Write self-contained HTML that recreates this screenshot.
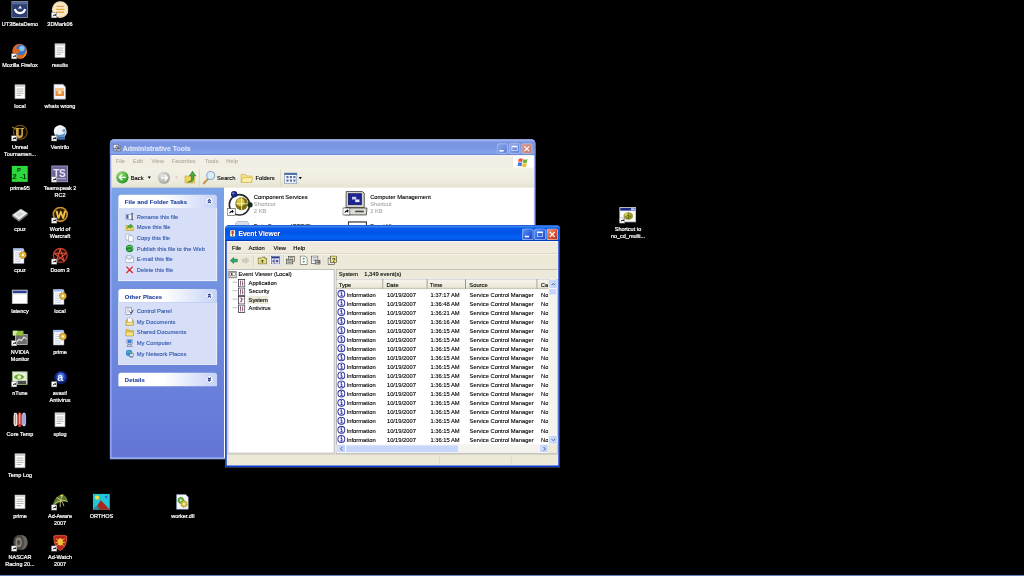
<!DOCTYPE html>
<html><head><meta charset="utf-8"><title>Desktop</title>
<style>
html,body{margin:0;padding:0;background:#000;overflow:hidden;width:1024px;height:576px}
#root{position:absolute;left:0;top:0;width:1920px;height:1080px;background:#000;transform:scale(0.533333);transform-origin:0 0;filter:blur(0.8px);font-family:"Liberation Sans",sans-serif;font-size:10.85px;color:#000;overflow:hidden;-webkit-text-stroke-width:0.22px}
#root *{box-sizing:border-box}
.di{position:absolute;width:75px;height:77px;text-align:center}
.di .ic{position:absolute;left:21px;top:0;width:32px;height:32px}
.di .ic>svg{position:absolute;left:0;top:0;width:32px;height:32px}
.di .ic>svg.sc{left:0;top:21px;width:11px;height:11px}
.di .lb{position:absolute;left:-10px;width:95px;top:36.800px;color:#fff;line-height:13px;font-size:10.3px;-webkit-text-stroke-width:0.4px}
#taskbar{position:absolute;left:0;top:1077.800px;width:1920px;height:2.200px;background:#647cbc}
.win{position:absolute;overflow:hidden}
.abs{position:absolute}
.tb-title{position:absolute;left:0;top:0;right:0;height:30px}
.tb-title .cap{position:absolute;left:25px;top:9.5px;font-weight:bold;font-size:13px;color:#fff;white-space:nowrap}
.tb-title .cap.act{text-shadow:1px 1px 0 #0a1883}
.cbtn{position:absolute;top:6.5px;width:21px;height:21px;border-radius:3px;border:1px solid rgba(255,255,255,.75)}
.menu span{position:absolute;top:4.500px;white-space:nowrap}
.sph{background:linear-gradient(90deg,#fff,#fff 45%,#c6d3f7);border-radius:5px 5px 0 0;color:#1f3f9c;font-weight:bold;font-size:11px;letter-spacing:.25px;padding:8px 0 0 12px;white-space:nowrap}
.sph i{position:absolute;right:7px;top:5px;width:15px;height:15px;border-radius:50%;background:#fff;border:1px solid #a8b8ea}
.spb{background:#d6dff7;border:1px solid #fff;border-top:0}
.spb a{position:absolute;left:33.500px;color:#3257ac;white-space:nowrap}
.tl{margin-top:-3px;position:absolute;left:8px;width:9px;height:1.500px;background:#c4c4c4}
.lg{left:18px;width:14px;height:16px}
.hdr{top:0;height:18px;background:linear-gradient(#f6f5ef,#ece9d8 80%,#d8d4c0);border-right:2px solid #8e8c7c;border-bottom:1.500px solid #a8a594;padding:4px 0 0 4px;white-space:nowrap;overflow:hidden}
.row{position:absolute;left:0;width:396px;height:17px;white-space:nowrap}
.row span{position:absolute;top:3px}
.row svg{position:absolute;left:1px;top:0;width:16px;height:16px}
.sbb{width:17px;height:17px;background:linear-gradient(90deg,#d4e0fd,#bccefa);border:1px solid #fff;border-radius:3px;box-shadow:0 0 0 1px #b4c8f6 inset}
.sbb svg{position:absolute;left:4px;top:5px;width:9px;height:6px}
.spb a i{position:absolute;left:-21.500px;top:-2px;width:16px;height:16px}
.spb a i svg{width:16px;height:16px;display:block}
.sph i svg{position:absolute;left:2px;top:2px;width:9px;height:9px}
.menu.m2 span{top:3px}
.cbtn.ina{top:7.500px;width:19.500px;height:19.500px}
.cbtn.ina>*{transform:translate(-0.700px,-0.700px)}

</style></head>
<body>
<div id="root">
<div class="di" style="left:0.0px;top:2.0px"><div class="ic"><svg viewBox="0 0 32 32"><rect x="1" y="1" width="30" height="30" fill="#2c3f72" stroke="#8e9cc0" stroke-width="1.5"/><rect x="2" y="2" width="28" height="4" fill="#5a6e9e"/><path d="M7 15c2 10 17 10 19 0" fill="none" stroke="#fff" stroke-width="4"/><path d="M13 14l4-5 3 5z" fill="#fff"/></svg></div><div class="lb">UT3BetaDemo</div></div>
<div class="di" style="left:75.0px;top:2.0px"><div class="ic"><svg viewBox="0 0 32 32"><circle cx="17" cy="16" r="14.500" fill="#f8e8c8" stroke="#f2d8ae" stroke-width="2.500"/><g stroke="#eca444" stroke-width="2.600"><path d="M10 10h14M9 15.500h16M10 21h14"/></g></svg><svg class="sc" viewBox="0 0 11 11"><rect width="11" height="11" fill="#fff"/><rect x=".5" y=".5" width="10" height="10" fill="none" stroke="#555"/><path d="M3 8.5c0-3 1.5-4.5 4-4.5V2.5L9.5 5 7 7.5V6C5 6 4 7 3 8.5z" fill="#000"/></svg></div><div class="lb">3DMark06</div></div>
<div class="di" style="left:0.0px;top:78.9px"><div class="ic"><svg viewBox="0 0 32 32"><circle cx="16" cy="17" r="14" fill="#d8601c"/><circle cx="18" cy="15" r="10.500" fill="#3a74c4"/><circle cx="20" cy="12" r="5" fill="#8cc0ee"/><path d="M3 13c2-6 7-9 13-9-5 2-7 5-6 9 3-1 6 1 6 4s-3 5-7 3c2 4 8 6 14 3 3-2 5-5 5-9 2 8-2 15-9 17S2 22 3 13z" fill="#e0681c"/><path d="M28 14c2 8-2 15-9 17 6-4 8-10 9-17z" fill="#f4b42c"/></svg><svg class="sc" viewBox="0 0 11 11"><rect width="11" height="11" fill="#fff"/><rect x=".5" y=".5" width="10" height="10" fill="none" stroke="#555"/><path d="M3 8.5c0-3 1.5-4.5 4-4.5V2.5L9.5 5 7 7.5V6C5 6 4 7 3 8.5z" fill="#000"/></svg></div><div class="lb">Mozilla Firefox</div></div>
<div class="di" style="left:75.0px;top:78.9px"><div class="ic"><svg viewBox="0 0 32 32"><path d="M7 3h19v26H7z" fill="#fdfdfa" stroke="#9a9a9a"/><path d="M7 3h19v4H7z" fill="#d4d4d4"/><g stroke="#a8a8a8" stroke-width="1.6"><path d="M10 11h13M10 15h13M10 19h13M10 23h9"/></g></svg></div><div class="lb">results</div></div>
<div class="di" style="left:0.0px;top:155.9px"><div class="ic"><svg viewBox="0 0 32 32"><path d="M7 3h19v26H7z" fill="#fdfdfa" stroke="#9a9a9a"/><path d="M7 3h19v4H7z" fill="#d4d4d4"/><g stroke="#a8a8a8" stroke-width="1.6"><path d="M10 11h13M10 15h13M10 19h13M10 23h9"/></g></svg></div><div class="lb">local</div></div>
<div class="di" style="left:75.0px;top:155.9px"><div class="ic"><svg viewBox="0 0 32 32"><path d="M5 2h17l5 5v23H5z" fill="#f6f8ff" stroke="#8a96b8"/><rect x="8" y="9" width="16" height="15" fill="#e98b3a"/><rect x="8" y="9" width="16" height="6" fill="#f6c58c"/><circle cx="16" cy="17" r="3.5" fill="#fbe3b0"/></svg></div><div class="lb">whats wrong</div></div>
<div class="di" style="left:0.0px;top:232.8px"><div class="ic"><svg viewBox="0 0 32 32"><circle cx="17" cy="15" r="13" fill="#120c02" stroke="#7a5a18" stroke-width="2"/><path d="M9 7h7v2h-2v10c0 3 5 3 5 0V9h-2V7h7v2h-2v11c0 8-13 8-13 0V9H9z" fill="#cfa444"/><path d="M2 5l8 5" stroke="#a88430" stroke-width="2"/></svg><svg class="sc" viewBox="0 0 11 11"><rect width="11" height="11" fill="#fff"/><rect x=".5" y=".5" width="10" height="10" fill="none" stroke="#555"/><path d="M3 8.5c0-3 1.5-4.5 4-4.5V2.5L9.5 5 7 7.5V6C5 6 4 7 3 8.5z" fill="#000"/></svg></div><div class="lb">Unreal<br>Tournamen...</div></div>
<div class="di" style="left:75.0px;top:232.8px"><div class="ic"><svg viewBox="0 0 32 32"><ellipse cx="17" cy="14" rx="12" ry="12" fill="#e9f0f8"/><path d="M5 14c0-9 8-13 15-11-6 1-9 5-9 10z" fill="#fff"/><path d="M8 18c4 3 13 3 19-3-1 9-8 14-15 12z" fill="#5a8fc8"/><path d="M12 24h14v5H12z" fill="#3a6aa8"/><circle cx="24" cy="12" r="3" fill="#7e9cc0"/></svg><svg class="sc" viewBox="0 0 11 11"><rect width="11" height="11" fill="#fff"/><rect x=".5" y=".5" width="10" height="10" fill="none" stroke="#555"/><path d="M3 8.5c0-3 1.5-4.5 4-4.5V2.5L9.5 5 7 7.5V6C5 6 4 7 3 8.5z" fill="#000"/></svg></div><div class="lb">Ventrilo</div></div>
<div class="di" style="left:0.0px;top:309.7px"><div class="ic"><svg viewBox="0 0 32 32"><rect x="1" y="1" width="30" height="30" fill="#2cd83c"/><text x="2" y="26" font-family="Liberation Sans, sans-serif" font-size="15" font-weight="bold" fill="#0a2a0a">2</text><text x="11" y="13" font-family="Liberation Sans, sans-serif" font-size="11" font-weight="bold" fill="#0a2a0a">P</text><text x="17" y="25" font-family="Liberation Sans, sans-serif" font-size="13" font-weight="bold" fill="#0a2a0a">-1</text></svg></div><div class="lb">prime95</div></div>
<div class="di" style="left:75.0px;top:309.7px"><div class="ic"><svg viewBox="0 0 32 32"><rect x="1" y="1" width="30" height="30" fill="#6a6596" stroke="#b9b6d6" stroke-width="1.5"/><text x="4" y="21" font-family="Liberation Sans, sans-serif" font-size="19" font-weight="bold" fill="#e8e6f6" letter-spacing="-1">TS</text><path d="M4 25h24" stroke="#bdb9dd" stroke-width="2"/></svg><svg class="sc" viewBox="0 0 11 11"><rect width="11" height="11" fill="#fff"/><rect x=".5" y=".5" width="10" height="10" fill="none" stroke="#555"/><path d="M3 8.5c0-3 1.5-4.5 4-4.5V2.5L9.5 5 7 7.5V6C5 6 4 7 3 8.5z" fill="#000"/></svg></div><div class="lb">Teamspeak 2<br>RC2</div></div>
<div class="di" style="left:0.0px;top:386.7px"><div class="ic"><svg viewBox="0 0 32 32"><path d="M2 16L18 5l13 8-16 13z" fill="#e9ece9" stroke="#9aa09a"/><path d="M2 16l13 10v3L2 19z" fill="#8f968f"/><path d="M15 26l16-13v3L15 29z" fill="#6f766f"/><path d="M9 15l8-5 6 4-8 6z" fill="#cfd4cf"/></svg></div><div class="lb">cpuz</div></div>
<div class="di" style="left:75.0px;top:386.7px"><div class="ic"><svg viewBox="0 0 32 32"><circle cx="17" cy="15" r="13" fill="#2a1a06" stroke="#c9952a" stroke-width="3"/><path d="M8 8h4l2 9 3-9h2l3 9 2-9h4l-4 15h-3l-3-8-3 8h-3z" fill="#f0c24c"/></svg><svg class="sc" viewBox="0 0 11 11"><rect width="11" height="11" fill="#fff"/><rect x=".5" y=".5" width="10" height="10" fill="none" stroke="#555"/><path d="M3 8.5c0-3 1.5-4.5 4-4.5V2.5L9.5 5 7 7.5V6C5 6 4 7 3 8.5z" fill="#000"/></svg></div><div class="lb">World of<br>Warcraft</div></div>
<div class="di" style="left:0.0px;top:463.6px"><div class="ic"><svg viewBox="0 0 32 32"><path d="M4 2h17l3 3v25H4z" fill="#fdfdff" stroke="#8a96b8"/><path d="M4 2h20v4H4z" fill="#a9c0ee"/><g stroke="#b9c4dc" stroke-width="1.5"><path d="M7 10h12M7 14h10M7 18h10M7 22h12M7 26h12"/></g><circle cx="22" cy="14" r="6.5" fill="#e2b13a" stroke="#8f6a14" stroke-width="1.5" stroke-dasharray="3 2"/><circle cx="22" cy="14" r="2.3" fill="#fff6cf"/></svg></div><div class="lb">cpuz</div></div>
<div class="di" style="left:75.0px;top:463.6px"><div class="ic"><svg viewBox="0 0 32 32"><circle cx="17" cy="15" r="13" fill="#2a0804" stroke="#c43a24" stroke-width="2.5"/><path d="M17 3l7 22L6 11h22L10 25z" fill="none" stroke="#e2553a" stroke-width="2"/></svg><svg class="sc" viewBox="0 0 11 11"><rect width="11" height="11" fill="#fff"/><rect x=".5" y=".5" width="10" height="10" fill="none" stroke="#555"/><path d="M3 8.5c0-3 1.5-4.5 4-4.5V2.5L9.5 5 7 7.5V6C5 6 4 7 3 8.5z" fill="#000"/></svg></div><div class="lb">Doom 3</div></div>
<div class="di" style="left:0.0px;top:540.5px"><div class="ic"><svg viewBox="0 0 32 32"><rect x="2" y="3" width="28" height="25" fill="#fff" stroke="#c9c9c9" stroke-width="1.5"/><rect x="3" y="4" width="26" height="5" fill="#2a3f9a"/><rect x="3" y="9" width="26" height="2" fill="#d8d4c8"/></svg></div><div class="lb">latency</div></div>
<div class="di" style="left:75.0px;top:540.5px"><div class="ic"><svg viewBox="0 0 32 32"><path d="M4 2h17l3 3v25H4z" fill="#fdfdff" stroke="#8a96b8"/><path d="M4 2h20v4H4z" fill="#a9c0ee"/><g stroke="#b9c4dc" stroke-width="1.5"><path d="M7 10h12M7 14h10M7 18h10M7 22h12M7 26h12"/></g><circle cx="22" cy="14" r="6.5" fill="#e2b13a" stroke="#8f6a14" stroke-width="1.5" stroke-dasharray="3 2"/><circle cx="22" cy="14" r="2.3" fill="#fff6cf"/></svg></div><div class="lb">local</div></div>
<div class="di" style="left:0.0px;top:617.4px"><div class="ic"><svg viewBox="0 0 32 32"><rect x="8" y="10" width="22" height="19" fill="#6d6d6d" stroke="#c9c9c9" stroke-width="1.5"/><path d="M10 25l5-6 4 3 5-7 5 4" fill="none" stroke="#e8e8e8" stroke-width="2"/><path d="M3 3h20v9H3z" fill="#8fbf3a"/><path d="M3 3h9l-4 9H3z" fill="#d6eaa8"/></svg><svg class="sc" viewBox="0 0 11 11"><rect width="11" height="11" fill="#fff"/><rect x=".5" y=".5" width="10" height="10" fill="none" stroke="#555"/><path d="M3 8.5c0-3 1.5-4.5 4-4.5V2.5L9.5 5 7 7.5V6C5 6 4 7 3 8.5z" fill="#000"/></svg></div><div class="lb">NVIDIA<br>Monitor</div></div>
<div class="di" style="left:75.0px;top:617.4px"><div class="ic"><svg viewBox="0 0 32 32"><path d="M4 2h17l3 3v25H4z" fill="#fdfdff" stroke="#8a96b8"/><path d="M4 2h20v4H4z" fill="#a9c0ee"/><g stroke="#b9c4dc" stroke-width="1.5"><path d="M7 10h12M7 14h10M7 18h10M7 22h12M7 26h12"/></g><circle cx="22" cy="14" r="6.5" fill="#e2b13a" stroke="#8f6a14" stroke-width="1.5" stroke-dasharray="3 2"/><circle cx="22" cy="14" r="2.3" fill="#fff6cf"/></svg></div><div class="lb">prime</div></div>
<div class="di" style="left:0.0px;top:694.4px"><div class="ic"><svg viewBox="0 0 32 32"><rect x="2" y="3" width="28" height="24" fill="#e7efe0" stroke="#8aa76a" stroke-width="1.5"/><path d="M5 13c4-7 14-7 20 0-6 7-16 7-20 0z" fill="#6fae2a"/><circle cx="15" cy="13" r="3.5" fill="#e9f4d8"/><rect x="12" y="20" width="16" height="6" fill="#4a4a4a"/></svg><svg class="sc" viewBox="0 0 11 11"><rect width="11" height="11" fill="#fff"/><rect x=".5" y=".5" width="10" height="10" fill="none" stroke="#555"/><path d="M3 8.5c0-3 1.5-4.5 4-4.5V2.5L9.5 5 7 7.5V6C5 6 4 7 3 8.5z" fill="#000"/></svg></div><div class="lb">nTune</div></div>
<div class="di" style="left:75.0px;top:694.4px"><div class="ic"><svg viewBox="0 0 32 32"><circle cx="18" cy="14" r="12.500" fill="#0e1e6a"/><circle cx="18" cy="13" r="9" fill="#2448b8"/><circle cx="18" cy="11" r="5.500" fill="#4a7ae0"/><text x="11.500" y="21" font-family="Liberation Sans, sans-serif" font-size="20" font-weight="bold" fill="#eef2ff">a</text></svg><svg class="sc" viewBox="0 0 11 11"><rect width="11" height="11" fill="#fff"/><rect x=".5" y=".5" width="10" height="10" fill="none" stroke="#555"/><path d="M3 8.5c0-3 1.5-4.5 4-4.5V2.5L9.5 5 7 7.5V6C5 6 4 7 3 8.5z" fill="#000"/></svg></div><div class="lb">avast!<br>Antivirus</div></div>
<div class="di" style="left:0.0px;top:771.3px"><div class="ic"><svg viewBox="0 0 32 32"><rect x="4" y="6" width="24" height="20" rx="4" fill="#7a6ea8"/><rect x="5" y="3" width="6" height="25" rx="2.500" fill="#f0e4dc"/><rect x="7" y="5" width="2" height="20" fill="#c88a7a"/><rect x="13" y="2" width="6" height="28" rx="3" fill="#c8382a"/><rect x="15" y="4" width="2" height="20" fill="#f8c8c0"/><rect x="21" y="3" width="6" height="25" rx="2.500" fill="#dcd8f0"/><rect x="23" y="5" width="2" height="20" fill="#6a7ad0"/></svg></div><div class="lb">Core Temp</div></div>
<div class="di" style="left:75.0px;top:771.3px"><div class="ic"><svg viewBox="0 0 32 32"><path d="M7 3h19v26H7z" fill="#fdfdfa" stroke="#9a9a9a"/><path d="M7 3h19v4H7z" fill="#d4d4d4"/><g stroke="#a8a8a8" stroke-width="1.6"><path d="M10 11h13M10 15h13M10 19h13M10 23h9"/></g></svg></div><div class="lb">splog</div></div>
<div class="di" style="left:0.0px;top:848.2px"><div class="ic"><svg viewBox="0 0 32 32"><path d="M7 3h19v26H7z" fill="#fdfdfa" stroke="#9a9a9a"/><path d="M7 3h19v4H7z" fill="#d4d4d4"/><g stroke="#a8a8a8" stroke-width="1.6"><path d="M10 11h13M10 15h13M10 19h13M10 23h9"/></g></svg></div><div class="lb">Temp Log</div></div>
<div class="di" style="left:0.0px;top:925.2px"><div class="ic"><svg viewBox="0 0 32 32"><path d="M7 3h19v26H7z" fill="#fdfdfa" stroke="#9a9a9a"/><path d="M7 3h19v4H7z" fill="#d4d4d4"/><g stroke="#a8a8a8" stroke-width="1.6"><path d="M10 11h13M10 15h13M10 19h13M10 23h9"/></g></svg></div><div class="lb">prime</div></div>
<div class="di" style="left:75.0px;top:925.2px"><div class="ic"><svg viewBox="0 0 32 32"><path d="M3 24C4 10 14 2 22 2c6 3 9 9 9 14-8-2-20 2-28 8z" fill="#5f7a2e"/><path d="M22 2c-4 6-6 16-5 24M3 24c8-10 18-14 28-8M10 8c6 2 12 8 14 16" fill="none" stroke="#d4d08a" stroke-width="1.6"/><path d="M16 3l6-1-2 5z" fill="#e8d44a"/></svg><svg class="sc" viewBox="0 0 11 11"><rect width="11" height="11" fill="#fff"/><rect x=".5" y=".5" width="10" height="10" fill="none" stroke="#555"/><path d="M3 8.5c0-3 1.5-4.5 4-4.5V2.5L9.5 5 7 7.5V6C5 6 4 7 3 8.5z" fill="#000"/></svg></div><div class="lb">Ad-Aware<br>2007</div></div>
<div class="di" style="left:152.6px;top:925.2px"><div class="ic"><svg viewBox="0 0 32 32"><rect x="0" y="1" width="32" height="30" fill="#22c6d6"/><circle cx="8" cy="8" r="4" fill="#f2e23a"/><path d="M22 6l6-2-2 6z" fill="#2a6ad6"/><path d="M0 31l9-9 6-9 6 6 11 12z" fill="#a8241c"/><path d="M0 31l9-9 3 9z" fill="#1c8fa8"/></svg></div><div class="lb">ORTHOS</div></div>
<div class="di" style="left:305.2px;top:925.2px"><div class="ic"><svg viewBox="0 0 32 32"><path d="M5 2h17l5 5v23H5z" fill="#f6f8ff" stroke="#8a96b8"/><circle cx="13" cy="13" r="5.5" fill="#5fb43a" stroke="#2f7a1c" stroke-width="1.5" stroke-dasharray="3 1.6"/><circle cx="19" cy="20" r="6" fill="#d6c43a" stroke="#8f7f14" stroke-width="1.5" stroke-dasharray="3 1.6"/><circle cx="13" cy="13" r="1.8" fill="#f6f8ff"/><circle cx="19" cy="20" r="2" fill="#f6f8ff"/></svg></div><div class="lb">worker.dll</div></div>
<div class="di" style="left:0.0px;top:1002.1px"><div class="ic"><svg viewBox="0 0 32 32"><ellipse cx="19" cy="15" rx="12" ry="14" fill="#6a6660"/><ellipse cx="14" cy="15" rx="10" ry="14" fill="#4a4640"/><ellipse cx="14" cy="15" rx="6" ry="9" fill="#8a847c"/><ellipse cx="14" cy="15" rx="3" ry="5" fill="#4a4640"/></svg><svg class="sc" viewBox="0 0 11 11"><rect width="11" height="11" fill="#fff"/><rect x=".5" y=".5" width="10" height="10" fill="none" stroke="#555"/><path d="M3 8.5c0-3 1.5-4.5 4-4.5V2.5L9.5 5 7 7.5V6C5 6 4 7 3 8.5z" fill="#000"/></svg></div><div class="lb">NASCAR<br>Racing 20...</div></div>
<div class="di" style="left:75.0px;top:1002.1px"><div class="ic"><svg viewBox="0 0 32 32"><path d="M5 3c8-2 16-2 24 0 0 14-3 22-12 27C8 25 5 17 5 3z" fill="#b8241c" stroke="#e86a4a" stroke-width="1.5"/><ellipse cx="17" cy="14" rx="5" ry="7" fill="#f0c43a"/><path d="M9 8l5 4M25 8l-5 4M8 15h5M26 15h-5M10 22l4-4M24 22l-4-4" stroke="#f0c43a" stroke-width="1.6"/></svg><svg class="sc" viewBox="0 0 11 11"><rect width="11" height="11" fill="#fff"/><rect x=".5" y=".5" width="10" height="10" fill="none" stroke="#555"/><path d="M3 8.5c0-3 1.5-4.5 4-4.5V2.5L9.5 5 7 7.5V6C5 6 4 7 3 8.5z" fill="#000"/></svg></div><div class="lb">Ad-Watch<br>2007</div></div>
<div class="di" style="left:1140.0px;top:386.7px"><div class="ic"><svg viewBox="0 0 32 32"><rect x="1" y="2" width="30" height="27" fill="#fbfbfb" stroke="#c9c9c9" stroke-width="1.5"/><rect x="2" y="3" width="28" height="5" fill="#1c2a8a"/><rect x="22" y="3.5" width="7" height="4" fill="#c9d0e6"/><ellipse cx="17" cy="18" rx="9" ry="7" fill="#9a9a2a"/><ellipse cx="15" cy="16" rx="5" ry="3.5" fill="#d6d65a"/><path d="M12 20c3-4 6-4 10 0M17 12v12" stroke="#4a4a0a" stroke-width="1.4" fill="none"/></svg><svg class="sc" viewBox="0 0 11 11"><rect width="11" height="11" fill="#fff"/><rect x=".5" y=".5" width="10" height="10" fill="none" stroke="#555"/><path d="M3 8.5c0-3 1.5-4.5 4-4.5V2.5L9.5 5 7 7.5V6C5 6 4 7 3 8.5z" fill="#000"/></svg></div><div class="lb">Shortcut to<br>no_cd_multi...</div></div>
<!-- Administrative Tools (inactive) -->
<div class="win" id="adm" style="left:206px;top:261px;width:798px;height:600px;border-radius:8px 8px 0 0;background:#a6b3f6;box-shadow:inset 0 0 0 1px #7484dc">
  <div class="tb-title" style="background:linear-gradient(#a4b8f0,#9cb2ee 7%,#7a94e0 20%,#7a96e2 55%,#84a4ea 88%,#6c8ad4 96%,#6482cc)">
    <svg class="abs" style="left:5px;top:8px;width:17px;height:16px" viewBox="0 0 16 16"><rect x="1" y="2" width="9" height="7" fill="#e8ecf6" stroke="#5a6a8a"/><rect x="6" y="5" width="9" height="9" fill="#d4d4d0" stroke="#4a4a5a"/><rect x="8" y="7" width="5" height="4" fill="#3a5ab8"/><rect x="2" y="10" width="5" height="4" fill="#c8ccd8" stroke="#5a5a6a"/></svg>
    <div class="cap" style="color:#dde6f9;left:24px">Administrative Tools</div>
    <div class="cbtn ina" style="left:726px;background:linear-gradient(135deg,#8aa6ea,#5f80d8);border-color:#c4d2f4"><div class="abs" style="left:4px;top:12px;width:8px;height:3px;background:#fff"></div></div>
    <div class="cbtn ina" style="left:749px;background:linear-gradient(135deg,#8aa6ea,#5f80d8);border-color:#c4d2f4"><div class="abs" style="left:4px;top:4px;width:11px;height:10px;border:1px solid #fff;border-top:3px solid #fff"></div></div>
    <div class="cbtn ina" style="left:772px;background:linear-gradient(135deg,#d89a92,#c47a72);border-color:#ecd0d0"><svg class="abs" style="left:3px;top:3px;width:13px;height:13px" viewBox="0 0 13 13"><path d="M2 2l9 9M11 2l-9 9" stroke="#fff" stroke-width="2.2"/></svg></div>
  </div>
  <div class="abs" style="left:3px;top:30px;width:792px;height:70px;background:#f0eee1"></div>
  <!-- menu -->
  <div class="abs menu m2" style="left:3px;top:30px;width:792px;height:23px;background:#f1efe3;color:#b4b0a2;border-top:2px solid #f4f6ff">
    <span style="left:8px">File</span><span style="left:40px">Edit</span><span style="left:75px">View</span><span style="left:113px">Favorites</span><span style="left:175px">Tools</span><span style="left:215px">Help</span>
    <div class="abs" style="left:751px;top:0;width:41px;height:22px;background:#fff;border-left:1px solid #d8d2bd"><svg class="abs" style="left:9px;top:1px;width:23px;height:21px" viewBox="0 0 18 16"><path d="M2 3c2-2 4-1 6 0l-1 5c-2-1-4-2-6 0z" fill="#e8543a"/><path d="M9 3c2 1 4 2 6 0l-1 5c-2 2-4 1-6 0z" fill="#6ab43a"/><path d="M1 9c2-2 4-1 6 0l-1 5c-2-1-4-2-6 0z" fill="#3a7ae0"/><path d="M8 9c2 1 4 2 6 0l-1 5c-2 2-4 1-6 0z" fill="#f0c02a"/></svg></div>
  </div>
  
  <!-- toolbar -->
  <div class="abs" id="admtool" style="left:4px;top:53px;width:791px;height:38px;background:linear-gradient(#f3f1e6,#efede0 60%,#e6e3d0)">
    <div class="abs" style="left:8px;top:7px;width:23px;height:23px;border-radius:50%;background:radial-gradient(circle at 35% 30%,#9ee07a,#3aa834 60%,#1f7a24)"><svg class="abs" style="left:4px;top:5px;width:15px;height:13px" viewBox="0 0 15 13"><path d="M7 1L2 6.500 7 12M2 6.500h12" fill="none" stroke="#fff" stroke-width="2.600"/></svg></div>
    <span class="abs" style="left:35px;top:13px">Back</span>
    <div class="abs" style="left:67px;top:17px;border:3px solid transparent;border-top:4px solid #000;border-bottom:0"></div>
    <div class="abs" style="left:86px;top:7.500px;width:23px;height:23px;border-radius:50%;background:radial-gradient(circle at 35% 30%,#e4e4e0,#b4b4ae 60%,#96968e)"><svg class="abs" style="left:4.500px;top:5px;width:15px;height:13px" viewBox="0 0 15 13"><path d="M8 1l5 5.500L8 12M13 6.500H1" fill="none" stroke="#fff" stroke-width="2.600"/></svg></div>
    <div class="abs" style="left:118px;top:17px;border:3px solid transparent;border-top:4px solid #d8c8c0;border-bottom:0"></div>
    <svg class="abs" style="left:135px;top:5px;width:23px;height:26px" viewBox="0 0 23 26"><path d="M2 11h8l2 2h8v11H2z" fill="#f0d45a" stroke="#b89a2a"/><path d="M7 22c5 0 7-2 7-7v-4h-4l6-9 6 9h-4v5c0 5-4 7-11 6z" fill="#4aa83a" stroke="#1f6a1c"/></svg>
    <div class="abs" style="left:164px;top:3px;width:1px;height:32px;background:#cfcab4"></div>
    <svg class="abs" style="left:169px;top:5px;width:26px;height:27px" viewBox="0 0 26 27"><path d="M3 25l8-9" stroke="#c49a5a" stroke-width="4" stroke-linecap="round"/><circle cx="16" cy="10" r="7.500" fill="#d8ecfa" stroke="#8aa4c4" stroke-width="2"/></svg>
    <span class="abs" style="left:197px;top:13px">Search</span>
    <svg class="abs" style="left:240px;top:9px;width:25px;height:21px" viewBox="0 0 25 21"><path d="M2 4h8l2 3h10v12H2z" fill="#f6e27a" stroke="#c4a83a"/><path d="M2 19l4-9h18l-3 9z" fill="#fbf0a8" stroke="#c4a83a"/></svg>
    <span class="abs" style="left:269px;top:13px">Folders</span>
    <div class="abs" style="left:315px;top:3px;width:1px;height:32px;background:#cfcab4"></div>
    <div class="abs" style="left:323px;top:10px;width:24px;height:20px;background:#f4f8ff;border:1px solid #5a789c;border-top:4px solid #4a6ca4"><div class="abs" style="left:3px;top:2px;width:4px;height:4px;background:#5a6e96;box-shadow:6.500px 0 #5a6e96,13px 0 #5a6e96,0 6.500px #5a6e96,6.500px 6.500px #5a6e96,13px 6.500px #5a6e96"></div></div>
    <div class="abs" style="left:350px;top:18px;border:3px solid transparent;border-top:4px solid #000;border-bottom:0"></div>
  </div>
  <!-- sidebar -->
  <div class="abs" id="side" style="left:3px;top:91px;width:211px;height:506px;border-left:1px solid transparent;background:linear-gradient(#7ba2e7,#6375d6)">
    <div class="abs sph" style="left:12px;top:13px;width:185px;height:25px">File and Folder Tasks<i><svg viewBox="0 0 9 9"><path d="M1.500 4L4.500 1l3 3M1.500 8l3-3 3 3" fill="none" stroke="#16308a" stroke-width="1.900"/></svg></i></div>
    <div class="abs spb" style="left:12px;top:38px;width:185px;height:137px">
      <a style="top:10px"><i><svg viewBox="0 0 16 16"><rect x="1" y="4" width="10" height="9" fill="#fff" stroke="#6a7aa8"/><rect x="2" y="5" width="4" height="7" fill="#3a5ab4"/><path d="M13 2v12M11 2h4M11 14h4" stroke="#2a2a2a" stroke-width="1.2"/></svg></i>Rename this file</a><a style="top:30px"><i><svg viewBox="0 0 16 16"><path d="M1 5h5l1 2h8v7H1z" fill="#f0d86a" stroke="#a88a2a"/><path d="M4 10c0-4 3-6 6-6V2l4 4-4 4V8c-2 0-4 0-6 2z" fill="#4ab43a" stroke="#1f6a1c" stroke-width=".8"/></svg></i>Move this file</a><a style="top:50px"><i><svg viewBox="0 0 16 16"><path d="M1 1h7l2 2v9H1z" fill="#fff" stroke="#7a8ab4"/><path d="M6 4h6l3 3v8H6z" fill="#fff" stroke="#7a8ab4"/></svg></i>Copy this file</a><a style="top:70px"><i><svg viewBox="0 0 16 16"><circle cx="8" cy="8" r="7" fill="#1f8a30"/><path d="M3 5c3 1 5-2 8-1s1 4 3 5M4 12c2-2 5-1 7-3" stroke="#8ae08a" stroke-width="1.6" fill="none"/></svg></i>Publish this file to the Web</a><a style="top:90px"><i><svg viewBox="0 0 16 16"><rect x="1" y="4" width="14" height="10" fill="#fff" stroke="#7a8ab4"/><path d="M1 4l7 6 7-6" fill="none" stroke="#7a8ab4"/><rect x="3" y="1" width="8" height="6" fill="#e8ecf8" stroke="#9aa6c8"/></svg></i>E-mail this file</a><a style="top:110px"><i><svg viewBox="0 0 16 16"><path d="M2 2l12 12M14 2L2 14" stroke="#d8242a" stroke-width="2.4"/></svg></i>Delete this file</a>
    </div>
    <div class="abs sph" style="left:12px;top:190px;width:185px;height:25px">Other Places<i><svg viewBox="0 0 9 9"><path d="M1.500 4L4.500 1l3 3M1.500 8l3-3 3 3" fill="none" stroke="#16308a" stroke-width="1.900"/></svg></i></div>
    <div class="abs spb" style="left:12px;top:215px;width:185px;height:117px">
      <a style="top:10px"><i><svg viewBox="0 0 16 16"><rect x="1" y="1" width="11" height="14" fill="#fff" stroke="#4a5a8a"/><path d="M3 4h6M3 7h6M3 10h4" stroke="#7a8ab4"/><path d="M8 9l3 4 4-7" fill="none" stroke="#2a3a7a" stroke-width="1.8"/></svg></i>Control Panel</a><a style="top:30px"><i><svg viewBox="0 0 16 16"><path d="M1 5h14v10H1z" fill="#f0d86a" stroke="#a88a2a"/><path d="M4 1h7l2 2v8H4z" fill="#fff" stroke="#8a8a8a"/><path d="M1 9h14v6H1z" fill="#f6e48a" stroke="#a88a2a"/></svg></i>My Documents</a><a style="top:50px"><i><svg viewBox="0 0 16 16"><path d="M1 3h5l1 2h8v10H1z" fill="#f0cc4a" stroke="#a88a2a"/><path d="M1 7h14v8H1z" fill="#f8e27a" stroke="#a88a2a"/></svg></i>Shared Documents</a><a style="top:70px"><i><svg viewBox="0 0 16 16"><rect x="3" y="1" width="10" height="9" rx="1" fill="#d8e0f0" stroke="#5a6a9a"/><rect x="4.500" y="2.500" width="7" height="5.500" fill="#3a7ad8"/><path d="M5 11h6l2 4H3z" fill="#c8cede" stroke="#5a6a9a"/></svg></i>My Computer</a><a style="top:90px"><i><svg viewBox="0 0 16 16"><circle cx="7" cy="7" r="6" fill="#3a8ad8"/><path d="M3 5c2 1 4-1 6 0s0 3 2 4" stroke="#7ad87a" stroke-width="1.6" fill="none"/><rect x="8" y="8" width="7" height="5" fill="#d8e0f0" stroke="#4a5a8a"/><path d="M9 15h5" stroke="#4a5a8a" stroke-width="1.4"/></svg></i>My Network Places</a>
    </div>
    <div class="abs sph" style="left:12px;top:347px;width:185px;height:25px">Details<i><svg viewBox="0 0 9 9"><path d="M1.500 1l3 3 3-3M1.500 5l3 3 3-3" fill="none" stroke="#16308a" stroke-width="1.900"/></svg></i></div>
  </div>
  <!-- content -->
  <div class="abs" id="admc" style="left:214px;top:91px;width:581px;height:506px;background:#fff">
    <svg class="abs" style="left:6px;top:5px;width:48px;height:48px" viewBox="0 0 48 48"><circle cx="23" cy="27" r="19" fill="#fff" stroke="#2a2a2a" stroke-width="3"/><circle cx="27" cy="25" r="12" fill="#7a6c10"/><circle cx="25" cy="22" r="7.500" fill="#d4c444"/><path d="M27 13v24M15 25h24" stroke="#f6f0c0" stroke-width="1.600"/><circle cx="13" cy="7" r="6" fill="#1c2478"/><circle cx="11.500" cy="5.500" r="2.200" fill="#6a78d8"/><circle cx="43" cy="27" r="5" fill="#1a2a1a"/><rect x="1" y="34" width="14" height="13" fill="#fff" stroke="#2a2a2a"/><path d="M4 44c0-4 2-6 5-6v-2l3.500 3.500L9 43v-2c-2 0-4 1-5 3z" fill="#000"/></svg>
    <svg class="abs" style="left:222px;top:5px;width:48px;height:48px" viewBox="0 0 48 48"><path d="M7 2h30l4 3v27H7z" fill="#d4d4cc" stroke="#3a3a3a" stroke-width="1.500"/><rect x="11" y="6" width="25" height="21" fill="#1c2496" stroke="#0a0a3a"/><rect x="18" y="12" width="8" height="5" fill="#c8d0f0"/><rect x="24" y="17" width="8" height="5" fill="#e8ecfa"/><path d="M4 33h42l-1 13H4z" fill="#dcdcd4" stroke="#3a3a3a" stroke-width="1.500"/><rect x="24" y="38" width="16" height="3" fill="#4a4a4a"/><rect x="1" y="33" width="13" height="13" fill="#fff" stroke="#2a2a2a"/><path d="M4 43c0-4 2-6 5-6v-2l3 3.500-3 3.500v-2c-2 0-4 1-5 3z" fill="#000"/></svg>
    <svg class="abs" style="left:20px;top:62px;width:30px;height:10px" viewBox="0 0 30 10"><path d="M2 10V4l3-3h18l3 3v6z" fill="#d8dce8" stroke="#8a92a8"/></svg>
    <svg class="abs" style="left:232px;top:63px;width:36px;height:8px" viewBox="0 0 36 8"><path d="M1 8V1h34v7" fill="#fff" stroke="#1a1a1a" stroke-width="2"/></svg>
    <span class="abs" style="left:56px;top:65.500px">Data Sources (ODBC)</span><span class="abs" style="left:274px;top:65.500px">Event Viewer</span>
    <span class="abs" style="left:56px;top:11.500px">Component Services</span><span class="abs" style="left:56px;top:24px;color:#aaa">Shortcut</span><span class="abs" style="left:56px;top:36.500px;color:#aaa">2 KB</span>
    <span class="abs" style="left:274px;top:11.500px">Computer Management</span><span class="abs" style="left:274px;top:24px;color:#aaa">Shortcut</span><span class="abs" style="left:274px;top:36.500px;color:#aaa">2 KB</span>
  </div>
</div>
<!-- Event Viewer (active) -->
<div class="win" id="ev" style="left:422px;top:422px;width:628px;height:454px;border-radius:8px 8px 0 0;background:#c4d4ff;box-shadow:inset 0 0 0 3px #0c38c6">
  <div class="tb-title" style="background:linear-gradient(#1c58c8,#3a82ee 9%,#0458ea 22%,#0054e8 50%,#0464f6 80%,#0458e8 90%,#0038b0 97%,#0034a8)">
    <svg class="abs" style="left:8px;top:8px;width:13px;height:15px" viewBox="0 0 16 17"><rect x="1.5" y="1" width="12" height="15" fill="#fffbe8" stroke="#5a5a4a"/><rect x="5" y="3" width="5" height="7" fill="#c43a2a"/><rect x="6" y="11" width="3" height="3" fill="#2a2a2a"/></svg>
    <div class="cap act" style="font-size:12.6px;top:8.500px">Event Viewer</div>
    <div class="cbtn" style="left:557px;background:linear-gradient(135deg,#5a94f6,#2a5fe0 60%,#1c48c8)"><div class="abs" style="left:4px;top:12px;width:8px;height:3px;background:#fff"></div></div>
    <div class="cbtn" style="left:580px;background:linear-gradient(135deg,#5a94f6,#2a5fe0 60%,#1c48c8)"><div class="abs" style="left:4px;top:4px;width:11px;height:10px;border:1px solid #fff;border-top:3px solid #fff"></div></div>
    <div class="cbtn" style="left:603px;background:linear-gradient(135deg,#ee9a7a,#d8502a 60%,#b83a1c)"><svg class="abs" style="left:3px;top:3px;width:13px;height:13px" viewBox="0 0 13 13"><path d="M2 2l9 9M11 2l-9 9" stroke="#fff" stroke-width="2.2"/></svg></div>
  </div>
  <div class="abs" style="left:4px;top:30px;width:620px;height:420px;background:#ece9d8"></div>
  <div class="abs menu" style="left:4px;top:30px;width:620px;height:22px;border-top:2px solid #f2f5ff;background:#efeadb">
    <span style="left:9px">File</span><span style="left:40px">Action</span><span style="left:87px">View</span><span style="left:124px">Help</span>
  </div>
  <div class="abs" style="left:4px;top:53px;width:620px;height:3px;border-top:1.500px solid #cfc8b4;border-bottom:1.500px solid #fff"></div>
  <!-- toolbar -->
  <div class="abs" id="evtool" style="left:4px;top:54px;width:620px;height:24px">
    <svg class="abs" style="left:5px;top:6px;width:15px;height:13px" viewBox="0 0 15 13"><path d="M7 1v3h7v5H7v3L1 6.500z" fill="#2aa86a" stroke="#14603a"/></svg>
    <svg class="abs" style="left:27px;top:6px;width:15px;height:13px" viewBox="0 0 15 13"><path d="M8 1v3H1v5h7v3l6-5.500z" fill="#d0cec0" stroke="#bcbaac"/></svg>
    <div class="abs" style="left:49px;top:2px;width:2px;height:20px;border-left:1px solid #c5c2b2;border-right:1px solid #fff"></div>
    <svg class="abs" style="left:57px;top:4px;width:18px;height:16px" viewBox="0 0 18 16"><path d="M1 4h6l2-2h5v3h3v10H1z" fill="#e8e07a" stroke="#3a3a1a"/><path d="M9 13V8M6.500 10L9 7.500l2.500 2.500" fill="none" stroke="#1a1a1a" stroke-width="1.400"/></svg>
    <div class="abs" style="left:79px;top:2px;width:22px;height:21px;background:#fff;border:1px solid #c0c6dc"></div>
    <svg class="abs" style="left:82px;top:4px;width:17px;height:16px" viewBox="0 0 17 16"><rect x="1" y="1" width="15" height="14" fill="#fff" stroke="#2a2a4a"/><rect x="1.500" y="1.500" width="14" height="3" fill="#2a3a9a"/><path d="M7 5v10" stroke="#2a2a4a"/><rect x="3" y="7" width="3" height="5" fill="#4a5aa8"/><rect x="9" y="7" width="5" height="5" fill="#4a5aa8"/></svg>
    <div class="abs" style="left:105px;top:2px;width:2px;height:20px;border-left:1px solid #c5c2b2;border-right:1px solid #fff"></div>
    <svg class="abs" style="left:110px;top:4px;width:18px;height:16px" viewBox="0 0 18 16"><rect x="5" y="1" width="11" height="9" fill="#e8e6da" stroke="#2a2a2a"/><rect x="1" y="6" width="12" height="9" fill="#d8d6c8" stroke="#2a2a2a"/><path d="M3 9h8M3 12h8M7 3h7" stroke="#3a3a3a"/></svg>
    <svg class="abs" style="left:136px;top:3px;width:15px;height:18px" viewBox="0 0 15 18"><path d="M1 1h9l4 4v12H1z" fill="#fff" stroke="#2a2a2a"/><path d="M7.500 5v3M7.500 13v-3M5.500 7l2-2 2 2M5.500 11l2 2 2-2" fill="none" stroke="#2a7a3a" stroke-width="1.300"/></svg>
    <svg class="abs" style="left:157px;top:3px;width:19px;height:18px" viewBox="0 0 19 18"><rect x="1" y="1" width="12" height="14" fill="#fff" stroke="#2a2a2a"/><path d="M3 4h8M3 7h8M3 10h5" stroke="#5a5a7a"/><rect x="8" y="9" width="9" height="7" fill="#d8d6c8" stroke="#2a2a2a"/><path d="M10 12.500h6M14 10.500l2 2-2 2" fill="none" stroke="#1a1a1a" stroke-width="1.200"/></svg>
    <div class="abs" style="left:181px;top:2px;width:2px;height:20px;border-left:1px solid #c5c2b2;border-right:1px solid #fff"></div>
    <svg class="abs" style="left:188px;top:3px;width:18px;height:18px" viewBox="0 0 18 18"><rect x="1" y="5" width="12" height="12" fill="#e8e6da" stroke="#2a2a2a"/><rect x="6" y="1" width="11" height="12" fill="#f0e67a" stroke="#2a2a2a"/><text x="8.500" y="11.500" font-family="Liberation Sans, sans-serif" font-size="11" font-weight="bold" fill="#1a1a1a">?</text></svg>
  </div>
  <!-- tree pane -->
  <div class="abs" id="tree" style="left:5px;top:83px;width:200px;height:345px;background:#fff;border:1.500px solid #8a8c92">
    <svg class="abs" style="left:0px;top:1px;width:16px;height:16px" viewBox="0 0 16 16"><rect x="1" y="2" width="14" height="12" fill="#d8d4c4" stroke="#3a3a3a"/><rect x="3" y="4" width="10" height="6" fill="#fff" stroke="#6a6a6a"/><rect x="5" y="5" width="3" height="4" fill="#7a2a2a"/></svg>
    <span class="abs" style="left:19px;top:2px">Event Viewer (Local)</span>
    <div class="abs" style="left:7px;top:17px;width:1px;height:56px;border-left:-1px dotted #b8b8b8"></div>
    <div class="tl" style="top:25px"></div><div class="tl" style="top:41px"></div><div class="tl" style="top:57px"></div><div class="tl" style="top:73px"></div>
    <svg class="abs lg" style="top:17px" viewBox="0 0 14 16"><use href="#logic"/></svg><span class="abs" style="left:38px;top:18px">Application</span>
    <svg class="abs lg" style="top:33px" viewBox="0 0 14 16"><use href="#logic"/></svg><span class="abs" style="left:38px;top:34px">Security</span>
    <svg class="abs lg" style="top:49px" viewBox="0 0 14 16"><rect x="1" y="1" width="12" height="14" fill="#fff" stroke="#3a2a3a" stroke-width="1.4"/><path d="M4 12l6-8M4 4h3v8" stroke="#7a3a5a" stroke-width="1.4" fill="none"/></svg>
    <div class="abs" style="left:36px;top:49px;width:39px;height:15px;background:#ece9d8"></div><span class="abs" style="left:38px;top:50px">System</span>
    <svg class="abs lg" style="top:65px" viewBox="0 0 14 16"><use href="#logic"/></svg><span class="abs" style="left:38px;top:66px">Antivirus</span>
  </div>
  <!-- right pane -->
  <div class="abs" style="left:208px;top:83px;width:416px;height:18px;border:1px solid #a8a596;border-bottom-color:#fff;border-right-color:#fff"><span class="abs" style="left:4px;top:1px">System</span><span class="abs" style="left:52px;top:1px">1,349 event(s)</span></div>
  <div class="abs" id="list" style="left:208px;top:101px;width:416px;height:327px;background:#fff;border:1.500px solid #74767c">
    <div class="abs hdr" style="left:0;width:88px">Type</div><div class="abs hdr" style="left:88px;width:83px;padding-left:5.500px">Date</div><div class="abs hdr" style="left:171px;width:72px">Time</div><div class="abs hdr" style="left:243px;width:134px;padding-left:6px">Source</div><div class="abs hdr" style="left:377px;width:22px;padding-left:6px">Ca</div>
    <div class="row" style="top:18.5px"><svg viewBox="0 0 16 16"><use href="#info"/></svg><span style="left:19px">Information</span><span style="left:94.500px">10/19/2007</span><span style="left:176px">1:37:17 AM</span><span style="left:249.500px">Service Control Manager</span><span style="left:383.500px">No</span></div>
<div class="row" style="top:35.5px"><svg viewBox="0 0 16 16"><use href="#info"/></svg><span style="left:19px">Information</span><span style="left:94.500px">10/19/2007</span><span style="left:176px">1:36:48 AM</span><span style="left:249.500px">Service Control Manager</span><span style="left:383.500px">No</span></div>
<div class="row" style="top:52.5px"><svg viewBox="0 0 16 16"><use href="#info"/></svg><span style="left:19px">Information</span><span style="left:94.500px">10/19/2007</span><span style="left:176px">1:36:21 AM</span><span style="left:249.500px">Service Control Manager</span><span style="left:383.500px">No</span></div>
<div class="row" style="top:69.5px"><svg viewBox="0 0 16 16"><use href="#info"/></svg><span style="left:19px">Information</span><span style="left:94.500px">10/19/2007</span><span style="left:176px">1:36:16 AM</span><span style="left:249.500px">Service Control Manager</span><span style="left:383.500px">No</span></div>
<div class="row" style="top:86.5px"><svg viewBox="0 0 16 16"><use href="#info"/></svg><span style="left:19px">Information</span><span style="left:94.500px">10/19/2007</span><span style="left:176px">1:36:15 AM</span><span style="left:249.500px">Service Control Manager</span><span style="left:383.500px">No</span></div>
<div class="row" style="top:103.5px"><svg viewBox="0 0 16 16"><use href="#info"/></svg><span style="left:19px">Information</span><span style="left:94.500px">10/19/2007</span><span style="left:176px">1:36:15 AM</span><span style="left:249.500px">Service Control Manager</span><span style="left:383.500px">No</span></div>
<div class="row" style="top:120.5px"><svg viewBox="0 0 16 16"><use href="#info"/></svg><span style="left:19px">Information</span><span style="left:94.500px">10/19/2007</span><span style="left:176px">1:36:15 AM</span><span style="left:249.500px">Service Control Manager</span><span style="left:383.500px">No</span></div>
<div class="row" style="top:137.5px"><svg viewBox="0 0 16 16"><use href="#info"/></svg><span style="left:19px">Information</span><span style="left:94.500px">10/19/2007</span><span style="left:176px">1:36:15 AM</span><span style="left:249.500px">Service Control Manager</span><span style="left:383.500px">No</span></div>
<div class="row" style="top:154.5px"><svg viewBox="0 0 16 16"><use href="#info"/></svg><span style="left:19px">Information</span><span style="left:94.500px">10/19/2007</span><span style="left:176px">1:36:15 AM</span><span style="left:249.500px">Service Control Manager</span><span style="left:383.500px">No</span></div>
<div class="row" style="top:171.5px"><svg viewBox="0 0 16 16"><use href="#info"/></svg><span style="left:19px">Information</span><span style="left:94.500px">10/19/2007</span><span style="left:176px">1:36:15 AM</span><span style="left:249.500px">Service Control Manager</span><span style="left:383.500px">No</span></div>
<div class="row" style="top:188.5px"><svg viewBox="0 0 16 16"><use href="#info"/></svg><span style="left:19px">Information</span><span style="left:94.500px">10/19/2007</span><span style="left:176px">1:36:15 AM</span><span style="left:249.500px">Service Control Manager</span><span style="left:383.500px">No</span></div>
<div class="row" style="top:205.5px"><svg viewBox="0 0 16 16"><use href="#info"/></svg><span style="left:19px">Information</span><span style="left:94.500px">10/19/2007</span><span style="left:176px">1:36:15 AM</span><span style="left:249.500px">Service Control Manager</span><span style="left:383.500px">No</span></div>
<div class="row" style="top:222.5px"><svg viewBox="0 0 16 16"><use href="#info"/></svg><span style="left:19px">Information</span><span style="left:94.500px">10/19/2007</span><span style="left:176px">1:36:15 AM</span><span style="left:249.500px">Service Control Manager</span><span style="left:383.500px">No</span></div>
<div class="row" style="top:239.5px"><svg viewBox="0 0 16 16"><use href="#info"/></svg><span style="left:19px">Information</span><span style="left:94.500px">10/19/2007</span><span style="left:176px">1:36:15 AM</span><span style="left:249.500px">Service Control Manager</span><span style="left:383.500px">No</span></div>
<div class="row" style="top:256.5px"><svg viewBox="0 0 16 16"><use href="#info"/></svg><span style="left:19px">Information</span><span style="left:94.500px">10/19/2007</span><span style="left:176px">1:36:15 AM</span><span style="left:249.500px">Service Control Manager</span><span style="left:383.500px">No</span></div>
<div class="row" style="top:273.5px"><svg viewBox="0 0 16 16"><use href="#info"/></svg><span style="left:19px">Information</span><span style="left:94.500px">10/19/2007</span><span style="left:176px">1:36:15 AM</span><span style="left:249.500px">Service Control Manager</span><span style="left:383.500px">No</span></div>
<div class="row" style="top:290.5px"><svg viewBox="0 0 16 16"><use href="#info"/></svg><span style="left:19px">Information</span><span style="left:94.500px">10/19/2007</span><span style="left:176px">1:36:15 AM</span><span style="left:249.500px">Service Control Manager</span><span style="left:383.500px">No</span></div>
    <!-- v scrollbar -->
    <div class="abs" style="right:0;top:0;width:17px;bottom:16px;background:#f4f3ee"></div>
    <div class="abs sbb" style="right:0;top:0"><svg viewBox="0 0 9 6"><path d="M1 5l3.500-3.500L8 5" fill="none" stroke="#4d6185" stroke-width="1.800"/></svg></div>
    <div class="abs" style="right:1px;top:17px;width:15px;height:12px;background:#c8d6fb;border:1px solid #fff;border-radius:2px;box-shadow:0 0 0 1px #b4c8f6 inset"></div>
    <div class="abs sbb" style="right:0;bottom:16px"><svg viewBox="0 0 9 6"><path d="M1 1l3.500 3.500L8 1" fill="none" stroke="#4d6185" stroke-width="1.800"/></svg></div>
    <!-- h scrollbar -->
    <div class="abs" style="left:0;bottom:0;right:17px;height:16px;background:#f4f3ee"></div>
    <div class="abs sbb" style="left:0;bottom:0;height:16px"><svg viewBox="0 0 6 9" style="width:6px;height:9px;left:5px;top:3px"><path d="M5 1L1.500 4.500 5 8" fill="none" stroke="#4d6185" stroke-width="1.800"/></svg></div>
    <div class="abs" style="left:17px;bottom:0;width:212px;height:15px;background:#c8d6fb;border:1px solid #fff;border-radius:2px"></div>
    <div class="abs sbb" style="right:17px;bottom:0;height:16px"><svg viewBox="0 0 6 9" style="width:6px;height:9px;left:6px;top:3px"><path d="M1 1l3.500 3.500L1 8" fill="none" stroke="#4d6185" stroke-width="1.800"/></svg></div>
    <div class="abs" style="right:0;bottom:0;width:17px;height:16px;background:#ece9d8"></div>
  </div>
  <!-- status bar -->
  <div class="abs" style="left:4px;top:430px;width:620px;height:20px;background:#ece9d8;border-top:1px solid #c5c2b2"><div class="abs" style="left:398px;top:2px;width:1px;height:16px;background:#d0cdbc"></div><div class="abs" style="left:532px;top:2px;width:1px;height:16px;background:#d0cdbc"></div></div>
</div>
<svg width="0" height="0" style="position:absolute"><defs>
<g id="logic"><rect x="1" y="1" width="12" height="14" fill="#fff" stroke="#2a2a3a" stroke-width="1.400"/><path d="M5 3v10M9 3v10" stroke="#7a3a5a" stroke-width="1.400"/><path d="M4 6h2M8 9h2" stroke="#2a2a3a"/></g>
<g id="info"><circle cx="8.600" cy="8.800" r="6.500" fill="#8a8aa8"/><circle cx="8" cy="8" r="6.500" fill="#fff" stroke="#3c3ca8" stroke-width="2"/><circle cx="8" cy="4.600" r="1.400" fill="#1c1ca8"/><path d="M6.400 7h2.500v4.500M6.200 11.600h4" stroke="#1c1ca8" stroke-width="1.700" fill="none"/></g>
</defs></svg>

<div id="taskbar"></div>
</div>
</body></html>
